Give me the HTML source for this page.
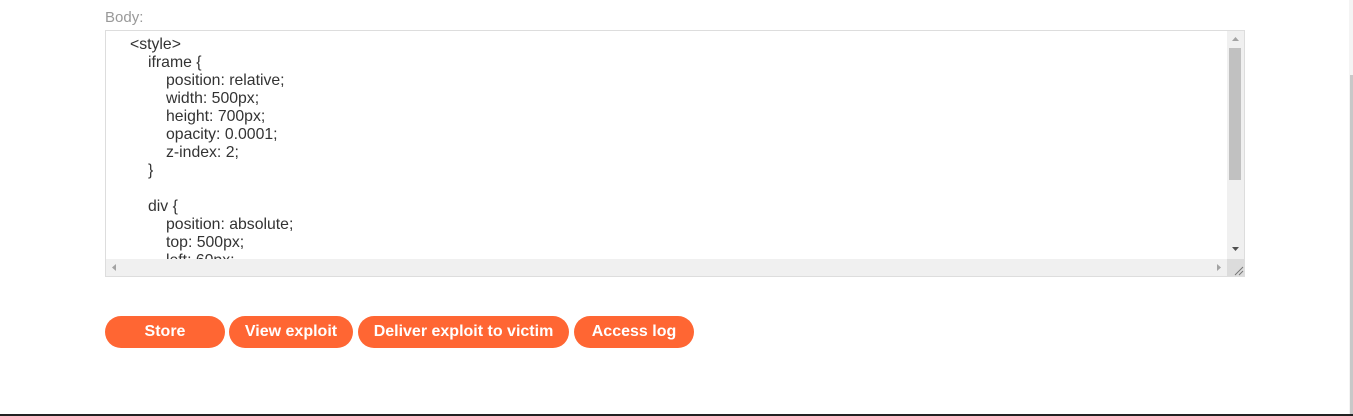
<!DOCTYPE html>
<html><head><style>
body{margin:0;width:1353px;height:416px;background:#fff;position:relative;overflow:hidden;font-family:"Liberation Sans",Arial,sans-serif;}
.lbl{position:absolute;left:105px;top:9px;font-size:15px;color:#999;}
.ta{position:absolute;left:105px;top:30px;width:1138px;height:245px;border:1px solid #ddd;background:#fff;overflow:hidden;}
.code{position:absolute;left:24px;top:5px;font-size:15.8px;line-height:18px;color:#333;white-space:pre;}
.code div{height:18px}
.i1{padding-left:18px}.i2{padding-left:36px}
.vs{position:absolute;right:0;top:0;width:17px;height:228px;background:#f0f0f0;}
.thumb{position:absolute;left:2px;top:17px;width:12px;height:132px;background:#c1c1c1;}
.hs{position:absolute;left:0;bottom:0;width:1121px;height:17px;background:#f0f0f0;}
.corner{position:absolute;right:0;bottom:0;width:17px;height:17px;background:#dcdcdc;}
.btn{position:absolute;top:316px;height:32px;border-radius:16px;background:#ff6633;color:#fff;font-weight:bold;font-size:16px;line-height:32px;text-align:center;}
.sb{position:absolute;left:1349px;top:0;width:4px;height:416px;background:#f4f4f4;}
.sbt{position:absolute;left:1350px;top:75px;width:3px;height:340px;background:#c8c8c8;}
.bot{position:absolute;left:0;top:414px;width:1353px;height:2px;background:#222;}
</style></head><body>
<div class="lbl">Body:</div>
<div class="ta">
<div class="code"><div>&lt;style&gt;</div><div class="i1">iframe {</div><div class="i2">position: relative;</div><div class="i2">width: 500px;</div><div class="i2">height: 700px;</div><div class="i2">opacity: 0.0001;</div><div class="i2">z-index: 2;</div><div class="i1">}</div><div></div><div class="i1">div {</div><div class="i2">position: absolute;</div><div class="i2">top: 500px;</div><div class="i2">left: 60px;</div></div>
<div class="vs"><div class="thumb"></div>
<svg style="position:absolute;left:4px;top:5px" width="9" height="6"><polygon points="4.5,1 1,5 8,5" fill="#a3a3a3"/></svg>
<svg style="position:absolute;left:4px;top:215px" width="9" height="6"><polygon points="1,1 8,1 4.5,5" fill="#505050"/></svg>
</div>
<div class="hs">
<svg style="position:absolute;left:5px;top:4px" width="6" height="9"><polygon points="5,1 5,8 1,4.5" fill="#a3a3a3"/></svg>
<svg style="position:absolute;left:1110px;top:4px" width="6" height="9"><polygon points="1,1 1,8 5,4.5" fill="#a3a3a3"/></svg>
</div>
<div class="corner"><svg width="17" height="17"><path d="M8 16L16 8M12 16L16 12" stroke="#777" stroke-width="1"/></svg></div>
</div>
<div class="btn" style="left:105px;width:120px">Store</div>
<div class="btn" style="left:229px;width:124px">View exploit</div>
<div class="btn" style="left:358px;width:211px">Deliver exploit to victim</div>
<div class="btn" style="left:574px;width:120px">Access log</div>
<div class="sb"></div><div class="sbt"></div>
<div class="bot"></div>
</body></html>
